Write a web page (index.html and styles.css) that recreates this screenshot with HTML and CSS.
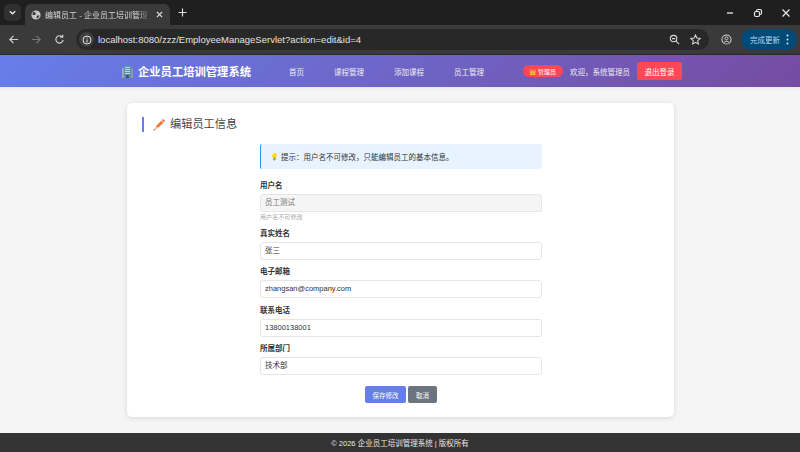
FILE: index.html
```html
<!DOCTYPE html>
<html lang="zh">
<head>
<meta charset="utf-8">
<title>编辑员工</title>
<link rel="stylesheet" href="styles.css">
</head>
<body>
<div class="window">
  <div class="tabstrip">
    <div class="tabsearch"><svg width="9" height="9" viewBox="0 0 10 10"><path d="M2 3.500 5 6.500 8 3.500" fill="none" stroke="#e8e8e8" stroke-width="1.500"/></svg></div>
    <div class="tab">
      <svg class="globe" width="10" height="10" viewBox="0 0 10 10"><circle cx="5" cy="5" r="4.600" fill="#c4c7c5"/><path d="M2 1.500 5 3 4 5 1.500 5ZM6 5.500 8.500 5.500 7 8.500 5.500 8Z" fill="#3a3a3a"/></svg>
      <span class="tabtitle">编辑员工 - 企业员工培训管理系统</span>
      <svg class="tabclose" width="7" height="7" viewBox="0 0 8 8"><path d="M1 1 7 7M7 1 1 7" stroke="#e0e0e0" stroke-width="1.400"/></svg>
    </div>
    <svg class="newtab" width="9" height="9" viewBox="0 0 10 10"><path d="M5 .5V9.500M.5 5H9.500" stroke="#dcdcdc" stroke-width="1.300"/></svg>
    <div class="winctl">
      <svg width="10" height="10" viewBox="0 0 10 10"><path d="M2 5H8" stroke="#e8e8e8" stroke-width="1.300"/></svg>
      <svg width="10" height="10" viewBox="0 0 10 10"><rect x="3.500" y="1.500" width="5" height="5" rx="1.500" fill="none" stroke="#e8e8e8" stroke-width="1.200"/><rect x="1.500" y="3.500" width="5" height="5" rx="1.500" fill="#1f1f1f" stroke="#e8e8e8" stroke-width="1.200"/></svg>
      <svg width="10" height="10" viewBox="0 0 10 10"><path d="M1.500 1.500 8.500 8.500M8.500 1.500 1.500 8.500" stroke="#e8e8e8" stroke-width="1.200"/></svg>
    </div>
  </div>
  <div class="toolbar">
    <svg width="11" height="11" viewBox="0 0 12 12"><path d="M11 6H2M6 2 2 6 6 10" fill="none" stroke="#d0d0d0" stroke-width="1.300"/></svg>
    <svg width="11" height="11" viewBox="0 0 12 12"><path d="M1 6H10M6 2 10 6 6 10" fill="none" stroke="#777" stroke-width="1.300"/></svg>
    <svg width="11" height="11" viewBox="0 0 12 12"><path d="M10 6.500A4 4 0 1 1 8.800 3M9.500 .8V3.500H6.800" fill="none" stroke="#d0d0d0" stroke-width="1.300"/></svg>
    <div class="omnibox">
      <div class="siteinfo"><svg width="10" height="10" viewBox="0 0 10 10"><circle cx="5" cy="5" r="4" fill="none" stroke="#dedede" stroke-width="1"/><path d="M5 4.500V7.500M5 2.500V3.500" stroke="#dedede" stroke-width="1"/></svg></div>
      <span class="url">localhost:8080/zzz/EmployeeManageServlet?action=edit&amp;id=4</span>
      <svg class="zoomicon" width="11" height="11" viewBox="0 0 12 12"><circle cx="5" cy="5" r="3.500" fill="none" stroke="#d8d8d8" stroke-width="1.200"/><path d="M7.500 7.500 11 11M3.300 5H6.700" stroke="#d8d8d8" stroke-width="1.200"/></svg>
      <svg width="11" height="11" viewBox="0 0 12 12"><path d="M6 1 7.500 4.400 11.200 4.800 8.400 7.200 9.200 10.900 6 9 2.800 10.900 3.600 7.200 .8 4.800 4.500 4.400Z" fill="none" stroke="#d8d8d8" stroke-width="1.100"/></svg>
    </div>
    <svg class="profile" width="11" height="11" viewBox="0 0 12 12"><circle cx="6" cy="6" r="5" fill="none" stroke="#d0d0d0" stroke-width="1.100"/><circle cx="6" cy="4.800" r="1.700" fill="none" stroke="#d0d0d0" stroke-width="1"/><path d="M2.800 9.500C4 7.500 8 7.500 9.200 9.500" fill="none" stroke="#d0d0d0" stroke-width="1"/></svg>
    <div class="update"><span>完成更新</span><svg width="3" height="11" viewBox="0 0 3 11"><circle cx="1.500" cy="1.500" r="1" fill="#cfe6f5"/><circle cx="1.500" cy="5.500" r="1" fill="#cfe6f5"/><circle cx="1.500" cy="9.500" r="1" fill="#cfe6f5"/></svg></div>
  </div>
  <header class="appbar">
    <div class="brand"><svg class="brandicon" width="11" height="13" viewBox="0 0 11 13"><rect x="0" y="3" width="2.500" height="10" fill="#9aa7b5"/><rect x="8.500" y="3" width="2.500" height="10" fill="#8d99a8"/><rect x="2" y="0.500" width="7" height="12.500" fill="#5b8fb0"/><path d="M3 2.500H8M3 4.500H8M3 6.500H8M3 8.500H8" stroke="#bcd9ec" stroke-width="1"/><rect x="4.300" y="10" width="2.400" height="3" fill="#3f4a55"/></svg><span>企业员工培训管理系统</span></div>
    <nav class="nav"><a>首页</a><a>课程管理</a><a>添加课程</a><a>员工管理</a></nav>
    <div class="user">
      <span class="badge"><span class="star">👑</span>管理员</span>
      <span class="welcome">欢迎，系统管理员</span>
      <span class="logout">退出登录</span>
    </div>
  </header>
  <main class="content">
    <section class="card">
      <h2 class="title"><svg class="pencil" width="12" height="12" viewBox="0 0 12 12"><path d="M3 7 8.500 1.500 10.500 3.500 5 9Z" fill="#f0793a"/><path d="M9 1 10 0 12 2 11 3Z" fill="#e8504a"/><path d="M3 7 5 9 .5 11.500Z" fill="#f3b98a"/><path d="M.5 11.500 1.300 10 2 10.900Z" fill="#5a4a42"/></svg>编辑员工信息</h2>
      <form class="form">
        <div class="tip"><span class="bulb">💡</span>提示：用户名不可修改，只能编辑员工的基本信息。</div>
        <div class="field first"><label>用户名</label><div class="input disabled">员工测试</div><small>用户名不可修改</small></div>
        <div class="field"><label>真实姓名</label><div class="input">张三</div></div>
        <div class="field"><label>电子邮箱</label><div class="input">zhangsan@company.com</div></div>
        <div class="field"><label>联系电话</label><div class="input">13800138001</div></div>
        <div class="field"><label>所属部门</label><div class="input">技术部</div></div>
        <div class="actions"><span class="btn primary">保存修改</span><span class="btn secondary">取消</span></div>
      </form>
    </section>
  </main>
  <footer class="footer">© 2026 企业员工培训管理系统 | 版权所有</footer>
</div>
</body>
</html>
```
FILE: styles.css
```css
* { box-sizing: border-box; }
html, body { margin: 0; padding: 0; }
body { font-family: "Liberation Sans", "Noto Sans CJK SC", sans-serif; background: #f5f5f5; }
.window { width: 800px; height: 452px; display: flex; flex-direction: column; overflow: hidden; }

.tabstrip { height: 25px; background: #1f1f1f; display: flex; align-items: center; padding: 4px 0 0 4px; flex: none; }
.tabsearch { width: 17px; height: 17px; margin-top: -4px; border-radius: 5px; background: #303030; display: flex; align-items: center; justify-content: center; }
.tab { width: 145px; height: 21px; margin-left: 4px; background: #3a3a3a; border-radius: 6px 6px 0 0; display: flex; align-items: center; padding: 0 7px 0 6px; color: #d8d8d8; font-size: 8px; }
.globe { flex: none; }
.tabtitle { width: 105px; margin-left: 4px; margin-right: 6px; white-space: nowrap; overflow: hidden; -webkit-mask-image: linear-gradient(90deg, #000 88%, transparent); mask-image: linear-gradient(90deg, #000 88%, transparent); }
.tabclose { flex: none; }
.newtab { margin: -4px 0 0 8px; }
.winctl { margin-left: auto; margin-top: -4px; display: flex; gap: 18px; padding-right: 9px; }

.toolbar { height: 30px; background: #3a3a3a; display: flex; align-items: center; padding: 0 0 0 8px; flex: none; border-bottom: 1px solid #2a2a2a; }
.toolbar > svg:nth-child(2) { margin-left: 12px; }
.toolbar > svg:nth-child(3) { margin-left: 12px; }
.omnibox { width: 633px; height: 21px; margin-left: 11px; background: #282828; border-radius: 11px; display: flex; align-items: center; padding: 0 8px 0 3px; flex: none; }
.siteinfo { width: 15px; height: 15px; border-radius: 50%; background: #3f3f3f; display: flex; align-items: center; justify-content: center; flex: none; }
.url { margin-left: 4px; flex: 1; color: #e3e3e3; font-size: 9.500px; white-space: nowrap; }
.zoomicon { margin-right: 10px; }
.profile { margin-left: 12px; flex: none; }
.update { margin-left: 9px; margin-right: 3px; height: 21px; flex: 1; background: #004a77; border-radius: 11px; display: flex; align-items: center; justify-content: flex-end; padding-right: 8px; gap: 6px; color: #b8d8ee; font-size: 7.500px; }

.appbar { height: 32px; flex: none; display: flex; align-items: center; padding: 0 118px 0 121px; background: linear-gradient(135deg, #667eea 0%, #764ba2 100%); color: #fff; box-shadow: 0 1px 5px rgba(0,0,0,.08); }
.brand { display: flex; align-items: center; font-size: 11.300px; font-weight: 700; gap: 5px; width: 168px; flex: none; white-space: nowrap; }
.brandicon { flex: none; margin-left: 1px; }
.nav { display: flex; gap: 30px; font-size: 7.500px; color: #eee; }
.user { margin-left: auto; display: flex; align-items: center; font-size: 7.500px; }
.badge { display: flex; align-items: center; height: 12px; width: 40px; background: #ff4757; border-radius: 6px; font-size: 6px; padding-left: 6px; gap: 2px; }
.star { font-size: 6px; width: 7px; }
.welcome { margin-left: 7px; color: #eee; }
.logout { margin-left: 7px; background: #ff4757; border-radius: 2px; height: 18px; width: 45px; display: flex; align-items: center; justify-content: center; font-size: 7.500px; }

.content { flex: 1; min-height: 0; padding: 16px 126px 16px 127px; }
.card { height: 314px; background: #fff; border-radius: 5px; box-shadow: 0 1px 5px rgba(0,0,0,.12); padding: 14px 15px 0; }
.title { margin: 0; height: 15px; display: flex; align-items: center; border-left: 2px solid #667eea; padding-left: 9px; font-size: 11.200px; line-height: 15px; font-weight: 400; color: #444; }
.pencil { flex: none; margin-right: 5px; }
.form { width: 282px; margin: 12px 0 0 118px; }
.tip { height: 25px; background: #e7f3ff; border-left: 1px solid #2196f3; border-radius: 2px; padding-left: 9px; display: flex; align-items: center; font-size: 7.500px; color: #333; }
.bulb { font-size: 7px; width: 11px; }
.field { margin-top: 7.500px; }
.field.first { margin-top: 12px; }
.field label { display: block; font-size: 7.500px; font-weight: 700; color: #333; line-height: 10px; height: 10px; margin-bottom: 3px; }
.input { height: 18px; border: 1px solid #e6e6e6; border-radius: 3px; background: #fff; font-size: 7.500px; color: #333; line-height: 16px; padding-left: 4px; }
.input.disabled { background: #f5f5f5; color: #777; }
.field small { display: block; font-size: 6.100px; color: #aaa; line-height: 8px; margin-top: 1px; margin-bottom: 1.500px; }
.actions { display: flex; justify-content: center; gap: 2px; margin-top: 11px; }
.btn { height: 17px; border-radius: 2px; color: #fff; font-size: 6.500px; display: flex; align-items: center; justify-content: center; }
.primary { width: 41px; background: #667eea; }
.secondary { width: 29px; background: #6c757d; }

.footer { height: 19px; flex: none; background: #333; color: #e8e8e8; font-size: 7.500px; display: flex; align-items: center; justify-content: center; }
```
